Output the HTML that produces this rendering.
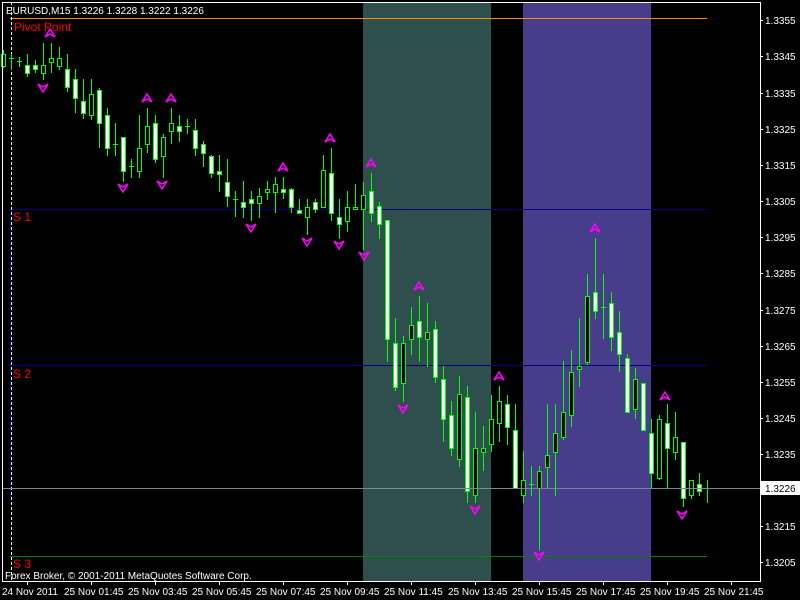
<!DOCTYPE html><html><head><meta charset="utf-8"><style>
body{margin:0;background:#000;width:800px;height:600px;overflow:hidden}
svg{display:block;font-family:"Liberation Sans",sans-serif}
</style></head><body>
<svg width="800" height="600" xmlns="http://www.w3.org/2000/svg">
<rect width="800" height="600" fill="#000"/>
<rect x="363" y="2" width="128" height="579" fill="#2f4f4f"/>
<rect x="523" y="2" width="128" height="579" fill="#483d8b"/>
<line x1="10" y1="18.5" x2="707" y2="18.5" stroke="#ff8c00"/>
<line x1="10" y1="209.5" x2="707" y2="209.5" stroke="#000080"/>
<line x1="10" y1="365.5" x2="707" y2="365.5" stroke="#000080"/>
<line x1="10" y1="556.5" x2="707" y2="556.5" stroke="#008000"/>
<line x1="11.5" y1="2" x2="11.5" y2="581" stroke="#fff" stroke-dasharray="3,2"/>
<line x1="10.5" y1="210" x2="10.5" y2="500" stroke="#00f" stroke-dasharray="1,1"/>
<path fill="none" stroke="#00ff00" d="M3.5 50V68M11.5 54V70M19.5 57V67M27.5 54V77M35.5 60V73M43.5 43V80M51.5 43V73M59.5 47V70M67.5 54V92M75.5 69V113M83.5 79V119M91.5 79V120M99.5 88V148M107.5 108V156M115.5 123V156M123.5 137V182M131.5 159V178M139.5 115V178M147.5 108V153M155.5 115V163M163.5 134V178M171.5 108V144M179.5 115V142M187.5 119V134M195.5 119V156M203.5 141V167M211.5 155V178M219.5 155V192M227.5 159V207M235.5 191V217M243.5 181V218M251.5 191V221M259.5 188V218M267.5 181V200M275.5 177V213M283.5 177V199M291.5 188V213M299.5 199V213M307.5 199V235M315.5 199V213M323.5 155V208M331.5 148V221M339.5 199V239M347.5 191V232M355.5 184V210M363.5 182V250M371.5 173V222M379.5 202V239M387.5 220V362M395.5 318V391M403.5 336V402M411.5 307V355M419.5 296V362M427.5 303V367M435.5 321V383M443.5 366V442M451.5 401V456M459.5 376V467M467.5 386V503M475.5 412V503M483.5 426V471M491.5 395V452M499.5 386V442M507.5 395V445M515.5 404V488M523.5 451V503M531.5 466V496M539.5 466V550M547.5 404V488M555.5 404V496M563.5 361V440M571.5 350V427M579.5 318V387M587.5 274V365M595.5 238V319M603.5 274V339M611.5 292V351M619.5 311V372M627.5 354V412M635.5 368V419M643.5 383V430M651.5 419V488M659.5 415V480M667.5 404V488M675.5 412V460M683.5 442V507M691.5 480V499M699.5 473V496M707.5 480V503
M1 58.5H6M9 58.5H14M17 61.5H22M113 144.5H118M129 166.5H134M185 126.5H190M233 199.5H238M529 484.5H534M601 307.5H606M705 488.5H710"/>
<g stroke="#00ff00" fill="#fff">
<rect x="25.5" y="65.5" width="4" height="8"/><rect x="33.5" y="65.5" width="4" height="4"/><rect x="65.5" y="69.5" width="4" height="18"/><rect x="73.5" y="79.5" width="4" height="19"/><rect x="81.5" y="101.5" width="4" height="12"/><rect x="97.5" y="90.5" width="4" height="33"/><rect x="105.5" y="115.5" width="4" height="33"/><rect x="121.5" y="137.5" width="4" height="34"/><rect x="153.5" y="123.5" width="4" height="36"/><rect x="177.5" y="126.5" width="4" height="5"/><rect x="193.5" y="130.5" width="4" height="18"/><rect x="201.5" y="144.5" width="4" height="9"/><rect x="209.5" y="156.5" width="4" height="17"/><rect x="217.5" y="171.5" width="4" height="3"/><rect x="225.5" y="182.5" width="4" height="14"/><rect x="241.5" y="202.5" width="4" height="5"/><rect x="249.5" y="199.5" width="4" height="4"/><rect x="281.5" y="189.5" width="4" height="3"/><rect x="289.5" y="189.5" width="4" height="18"/><rect x="297.5" y="210.5" width="4" height="3"/><rect x="313.5" y="202.5" width="4" height="7"/><rect x="329.5" y="173.5" width="4" height="40"/><rect x="337.5" y="217.5" width="4" height="7"/><rect x="369.5" y="191.5" width="4" height="22"/><rect x="377.5" y="206.5" width="4" height="18"/><rect x="385.5" y="220.5" width="4" height="119"/><rect x="393.5" y="343.5" width="4" height="44"/><rect x="417.5" y="321.5" width="4" height="16"/><rect x="433.5" y="329.5" width="4" height="48"/><rect x="441.5" y="379.5" width="4" height="40"/><rect x="449.5" y="415.5" width="4" height="33"/><rect x="465.5" y="397.5" width="4" height="94"/><rect x="505.5" y="404.5" width="4" height="23"/><rect x="513.5" y="430.5" width="4" height="58"/><rect x="593.5" y="292.5" width="4" height="19"/><rect x="609.5" y="303.5" width="4" height="34"/><rect x="617.5" y="332.5" width="4" height="22"/><rect x="625.5" y="358.5" width="4" height="54"/><rect x="641.5" y="383.5" width="4" height="47"/><rect x="649.5" y="433.5" width="4" height="40"/><rect x="665.5" y="423.5" width="4" height="25"/><rect x="681.5" y="442.5" width="4" height="56"/><rect x="697.5" y="484.5" width="4" height="7"/>
</g>
<g stroke="#00ff00" fill="#000">
<rect x="1.5" y="54.5" width="4" height="12"/><rect x="41.5" y="65.5" width="4" height="8"/><rect x="49.5" y="58.5" width="4" height="4"/><rect x="57.5" y="58.5" width="4" height="8"/><rect x="89.5" y="94.5" width="4" height="21"/><rect x="137.5" y="148.5" width="4" height="23"/><rect x="145.5" y="126.5" width="4" height="18"/><rect x="161.5" y="137.5" width="4" height="19"/><rect x="169.5" y="123.5" width="4" height="8"/><rect x="257.5" y="196.5" width="4" height="7"/><rect x="265.5" y="189.5" width="4" height="3"/><rect x="273.5" y="184.5" width="4" height="8"/><rect x="305.5" y="207.5" width="4" height="10"/><rect x="321.5" y="170.5" width="4" height="37"/><rect x="345.5" y="207.5" width="4" height="14"/><rect x="353.5" y="207.5" width="4" height="2"/><rect x="361.5" y="195.5" width="4" height="14"/><rect x="401.5" y="343.5" width="4" height="40"/><rect x="409.5" y="325.5" width="4" height="14"/><rect x="425.5" y="332.5" width="4" height="7"/><rect x="457.5" y="394.5" width="4" height="65"/><rect x="473.5" y="448.5" width="4" height="47"/><rect x="481.5" y="448.5" width="4" height="4"/><rect x="489.5" y="419.5" width="4" height="25"/><rect x="497.5" y="401.5" width="4" height="22"/><rect x="521.5" y="480.5" width="4" height="15"/><rect x="537.5" y="471.5" width="4" height="17"/><rect x="545.5" y="455.5" width="4" height="12"/><rect x="553.5" y="433.5" width="4" height="19"/><rect x="561.5" y="412.5" width="4" height="25"/><rect x="569.5" y="372.5" width="4" height="43"/><rect x="577.5" y="366.5" width="4" height="3"/><rect x="585.5" y="296.5" width="4" height="66"/><rect x="633.5" y="379.5" width="4" height="30"/><rect x="657.5" y="419.5" width="4" height="59"/><rect x="673.5" y="437.5" width="4" height="15"/><rect x="689.5" y="480.5" width="4" height="15"/>
</g>
<g fill="none" stroke="#ff00ff" stroke-width="1.5">
<path d="M45 37L50 29L55 37L50 34Z M142 102L147 94L152 102L147 99Z M166 102L171 94L176 102L171 99Z M278 171L283 163L288 171L283 168Z M325 142L330 134L335 142L330 139Z M366 167L371 159L376 167L371 164Z M414 290L419 282L424 290L419 287Z M494 380L499 372L504 380L499 377Z M590 232L595 224L600 232L595 229Z M660 400L665 392L670 400L665 397Z"/>
<path d="M38 84L43 92L48 84L43 87Z M118 184L123 192L128 184L123 187Z M157 181L162 189L167 181L162 184Z M246 224L251 232L256 224L251 227Z M302 238L307 246L312 238L307 241Z M334 241L339 249L344 241L339 244Z M359 252L364 260L369 252L364 255Z M398 405L403 413L408 405L403 408Z M470 506L475 514L480 506L475 509Z M534 552L539 560L544 552L539 555Z M677 511L682 519L687 511L682 514Z"/>
</g>
<line x1="2" y1="488.5" x2="760" y2="488.5" stroke="#778899"/>
<g font-size="12" fill="#f00">
<text x="14" y="31">Pivot Point</text><text x="13" y="221">S 1</text><text x="13" y="378">S 2</text><text x="13" y="568">S 3</text></g>
<text x="6" y="14" font-size="10" fill="#fff">EURUSD,M15  1.3226 1.3228 1.3222 1.3226</text>
<text x="5" y="579" font-size="10" fill="#fff">Forex Broker, © 2001-2011 MetaQuotes Software Corp.</text>
<rect x="2.5" y="2.5" width="758" height="579" fill="none" stroke="#fff"/>
<g font-size="10" fill="#fff">
<text x="765" y="24">1.3355</text><text x="765" y="60">1.3345</text><text x="765" y="97">1.3335</text><text x="765" y="133">1.3325</text><text x="765" y="169">1.3315</text><text x="765" y="205">1.3305</text><text x="765" y="241">1.3295</text><text x="765" y="277">1.3285</text><text x="765" y="314">1.3275</text><text x="765" y="350">1.3265</text><text x="765" y="386">1.3255</text><text x="765" y="422">1.3245</text><text x="765" y="458">1.3235</text><text x="765" y="530">1.3215</text><text x="765" y="566">1.3205</text>
<text x="2" y="595">24 Nov 2011</text><text x="64" y="595">25 Nov 01:45</text><text x="128" y="595">25 Nov 03:45</text><text x="192" y="595">25 Nov 05:45</text><text x="256" y="595">25 Nov 07:45</text><text x="320" y="595">25 Nov 09:45</text><text x="384" y="595">25 Nov 11:45</text><text x="448" y="595">25 Nov 13:45</text><text x="512" y="595">25 Nov 15:45</text><text x="576" y="595">25 Nov 17:45</text><text x="640" y="595">25 Nov 19:45</text><text x="704" y="595">25 Nov 21:45</text>
</g>
<path stroke="#fff" d="M760 20.5h3M760 56.5h3M760 93.5h3M760 129.5h3M760 165.5h3M760 201.5h3M760 237.5h3M760 273.5h3M760 310.5h3M760 346.5h3M760 382.5h3M760 418.5h3M760 454.5h3M760 526.5h3M760 562.5h3M27.5 581v4M91.5 581v4M155.5 581v4M219.5 581v4M283.5 581v4M347.5 581v4M411.5 581v4M475.5 581v4M539.5 581v4M603.5 581v4M667.5 581v4M731.5 581v4"/>
<rect x="761" y="481" width="39" height="14" fill="#fff"/>
<text x="765" y="492" font-size="10" fill="#000" font-family="Liberation Sans,sans-serif">1.3226</text>
</svg>
</body></html>
